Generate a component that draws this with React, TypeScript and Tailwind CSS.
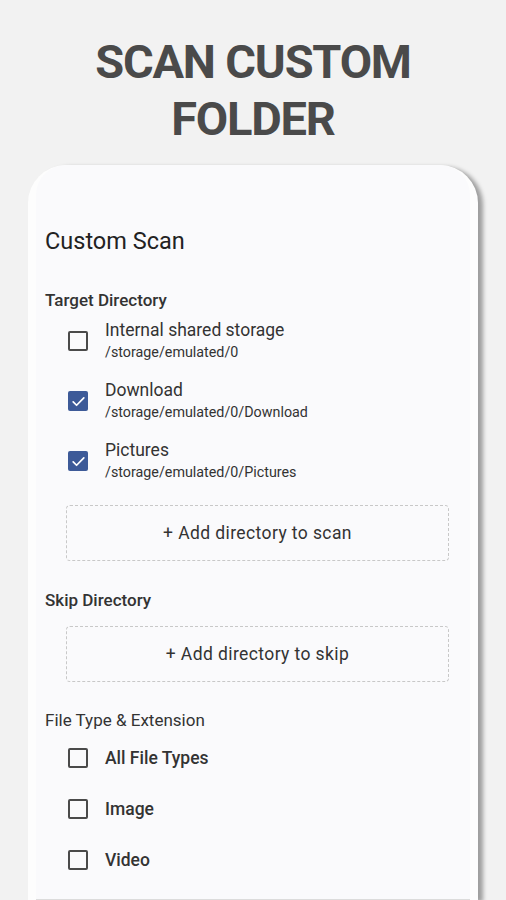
import React from 'react';

const ROBOTO = { fontFamily: 'Roboto, "Liberation Sans", sans-serif' };

function Box({ checked }: { checked?: boolean }) {
  if (checked) {
    return (
      <div className="w-5 h-5 rounded-[2px] bg-[#3d5a98] flex items-center justify-center shrink-0">
        <svg width="17" height="17" viewBox="0 0 24 24" fill="none">
          <path d="M4.5 12.5l4.8 4.8L19.5 7" stroke="#fff" strokeWidth="2.4" strokeLinecap="round" strokeLinejoin="round" />
        </svg>
      </div>
    );
  }
  return <div className="w-5 h-5 rounded-[2px] border-2 border-[#4a4a4a] shrink-0" />;
}

const targets = [
  { name: 'Internal shared storage', path: '/storage/emulated/0', checked: false },
  { name: 'Download', path: '/storage/emulated/0/Download', checked: true },
  { name: 'Pictures', path: '/storage/emulated/0/Pictures', checked: true },
];

const fileTypes = ['All File Types', 'Image', 'Video'];

export default function App() {
  return (
    <div className="w-[506px] h-[900px] overflow-hidden bg-[#f2f2f2] flex flex-col items-center">
      {/* Heading */}
      <h1
        className="mt-[33px] text-center text-[47px] leading-[57px] font-bold tracking-[-1.2px] text-[#4a4a4a]"
        style={ROBOTO}
      >
        SCAN CUSTOM
        <br />
        FOLDER
      </h1>

      {/* Card */}
      <div className="mt-[18px] w-[450px] flex-1 bg-[#fdfdfd] rounded-t-[38px] shadow-[5px_2px_4px_rgba(0,0,0,0.35)] px-2 overflow-hidden">
        <div className="h-full bg-[#fafafc] border-b border-[#dcdcdc] pl-[9px] rounded-t-[30px]" style={ROBOTO}>
          <p className="pt-[62px] text-[23.5px] leading-[28px] text-[#222]">Custom Scan</p>

          <p className="mt-[35px] text-[17px] leading-[20px] font-medium text-[#333]">Target Directory</p>

          <div className="mt-[9px] flex flex-col gap-[16px]">
            {targets.map((t) => (
              <div key={t.name} className="flex items-center pl-[23px]">
                <Box checked={t.checked} />
                <div className="ml-[17px]">
                  <p className="text-[17.5px] leading-[22px] text-[#333]">{t.name}</p>
                  <p className="text-[14.3px] leading-[22px] text-[#333]">{t.path}</p>
                </div>
              </div>
            ))}
          </div>

          <div className="mt-[22px] ml-[21px] w-[383px] h-[56px] border border-dashed border-[#c8c8c8] rounded-[4px] flex items-center justify-center text-[17.5px] tracking-[0.4px] text-[#333]">
            + Add directory to scan
          </div>

          <p className="mt-[29px] text-[17px] leading-[20px] font-medium text-[#333]">Skip Directory</p>

          <div className="mt-[16px] ml-[21px] w-[383px] h-[56px] border border-dashed border-[#c8c8c8] rounded-[4px] flex items-center justify-center text-[17.5px] tracking-[0.4px] text-[#333]">
            + Add directory to skip
          </div>

          <p className="mt-[28px] text-[17px] leading-[20px] text-[#333]">File Type &amp; Extension</p>

          <div className="mt-[18px] flex flex-col gap-[31px]">
            {fileTypes.map((f) => (
              <div key={f} className="flex items-center pl-[23px]">
                <Box />
                <p className="ml-[17px] text-[17.5px] leading-[20px] font-medium text-[#333]">{f}</p>
              </div>
            ))}
          </div>
        </div>
      </div>
    </div>
  );
}
